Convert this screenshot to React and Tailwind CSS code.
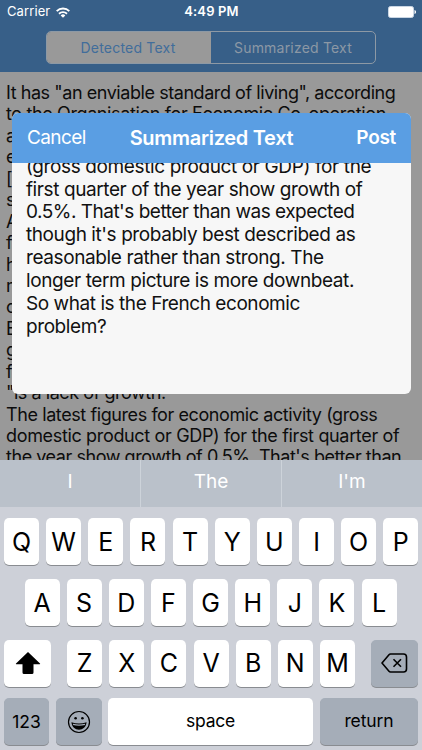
import { clsx } from 'clsx';

const ARTICLE = [
    ['It has "an enviable standard of living", according', 'tracking-[-0.44px]'],
    ['to the Organisation for Economic Co-operation', 'tracking-[-0.38px]'],
    ['a'],
    ['e'],
    ['['],
    ['s'],
    ['A'],
    ['f'],
    ['h'],
    ['m'],
    ['o'],
    ['E'],
    ['g'],
    ['f'],
    ['"is a lack of growth.', 'tracking-[-0.45px]'],
    ['The latest figures for economic activity (gross', 'tracking-[-0.41px]'],
    ['domestic product or GDP) for the first quarter of', 'tracking-[-0.34px]'],
    ["the year show growth of 0.5%. That's better than", 'tracking-[-0.45px]'],
];

const SUMMARY = [
    ['(gross domestic product or GDP) for the', 'tracking-[-0.38px]'],
    ['first quarter of the year show growth of', 'tracking-[-0.41px]'],
    ["0.5%. That's better than was expected", 'tracking-[-0.50px]'],
    ["though it's probably best described as", 'tracking-[-0.42px]'],
    ['reasonable rather than strong. The', 'tracking-[-0.39px]'],
    ['longer term picture is more downbeat.', 'tracking-[-0.40px]'],
    ['So what is the French economic', 'tracking-[-0.44px]'],
    ['problem?', 'tracking-[-0.42px]'],
];

function Key({ children, dark, className }) {
    return (
        <div
            className={clsx(
                'flex h-[47px] shrink-0 items-center justify-center rounded-[5px] shadow-[0_1px_0_#898c91]',
                dark ? 'bg-[#a5adb8]' : 'bg-white',
                className,
            )}
        >
            {children}
        </div>
    );
}

function Letters({ row }) {
    return (
        <div className="flex gap-[7.15px]">
            {row.split('').map((c) => (
                <Key key={c} className="w-[35px] pt-[2px] text-[25px]">{c}</Key>
            ))}
        </div>
    );
}

function StatusBar() {
    return (
        <div className="grid h-6 grid-cols-3 items-center pr-[6px] pl-[7px] text-[13px] text-white">
            <div className="flex items-center gap-[6px]">
                <span className="tracking-[0.1px]">Carrier</span>
                <svg width="14" height="11" viewBox="0 0 14 11" fill="none" stroke="white" strokeWidth="1.9">
                    <path d="M.7 4.1a9 9 0 0 1 12.6 0" />
                    <path d="M3 6.7a5.8 5.8 0 0 1 8 0" />
                    <path d="M7 10.800 4.700 8.500a3.2 3.2 0 0 1 4.600 0Z" fill="white" stroke="none" />
                </svg>
            </div>
            <div className="text-center font-semibold tracking-[0.15px] whitespace-nowrap">4:49 PM</div>
            <svg className="justify-self-end" width="28" height="12" viewBox="0 0 28 12">
                <rect x=".5" y=".5" width="25" height="11" rx="2" fill="white" stroke="#c9d6e4" />
                <path d="M26.5 4v4c1-.3 1.5-1 1.5-2s-.5-1.7-1.5-2Z" fill="white" />
            </svg>
        </div>
    );
}

function Keyboard() {
    return (
        <div className="h-[290px] bg-[#cdd0d8] text-black">
            <div className="grid h-[47px] grid-cols-[141px_141px_140px] divide-x divide-[#cdd3da] bg-[#bac1ca] text-center text-[19px] leading-[43px] text-white">
                <div>I</div>
                <div>The</div>
                <div>I'm</div>
            </div>
            <div className="flex flex-col pt-[11px]">
                <div className="pl-[4px]"><Letters row="QWERTYUIOP" /></div>
                <div className="mt-[14px] pl-[24.5px]"><Letters row="ASDFGHJKL" /></div>
                <div className="mt-[13.5px] flex justify-between px-[4px]">
                    <Key className="w-[47px]">
                        <svg width="26" height="24" viewBox="0 0 26 24">
                            <path d="M13 1 25 12.6Q25.5 13.3 24.7 13.3H18.5V21.5Q18.5 23 17 23H9Q7.5 23 7.5 21.5V13.3H1.3Q.5 13.3 1 12.6Z" />
                        </svg>
                    </Key>
                    <Letters row="ZXCVBNM" />
                    <Key dark className="w-[47px]">
                        <svg width="27" height="20" viewBox="0 0 27 20" fill="none" stroke="black" strokeWidth="1.6" strokeLinejoin="round">
                            <path d="M9.5 1H22.5Q25.5 1 25.5 4V16Q25.500 19 22.5 19H9.5Q8.6 19 8 18.3L1 10 8 1.7Q8.6 1 9.5 1Z" />
                            <path d="m12.5 6.2 7.5 7.6M20 6.2l-7.5 7.6" />
                        </svg>
                    </Key>
                </div>
                <div className="mt-[11.5px] flex pl-[4px] text-[17.5px]">
                    <Key dark className="w-[45px] pt-[2px]">123</Key>
                    <Key dark className="ml-[7px] w-[46px]">
                        <svg width="24" height="24" viewBox="0 0 24 24" fill="none" stroke="black" strokeWidth="1.2">
                            <circle cx="12" cy="12" r="10.5" />
                            <circle cx="8.6" cy="8.3" r="1.3" fill="black" stroke="none" />
                            <circle cx="15.4" cy="8.3" r="1.3" fill="black" stroke="none" />
                            <path d="M4.400 12.3Q12 14.8 19.600 12.3C19 17.2 16 19.700 12 19.700S5 17.2 4.400 12.3Z" fill="black" stroke="none" />
                            <path d="M6 14.4Q12 16 18 14.4" stroke="#a5adb8" strokeWidth="1.3" />
                        </svg>
                    </Key>
                    <Key className="ml-[6px] w-[205px] tracking-[-0.2px]">space</Key>
                    <Key dark className="ml-[7px] w-[98px] tracking-[-0.1px]">return</Key>
                </div>
            </div>
        </div>
    );
}

function Dialog() {
    return (
        <div className="absolute top-[113px] left-[12px] h-[281px] w-[399px] overflow-hidden rounded-[6px] bg-[#f7f7f7]">
            <div className="relative z-10 grid h-[50px] grid-cols-[1fr_auto_1fr] items-center bg-[#5a9ee3] px-[15px] text-white">
                <span className="pt-px text-[19px] tracking-[-0.6px]">Cancel</span>
                <span className="text-[20px] font-semibold tracking-[-0.3px]">Summarized Text</span>
                <span className="text-right text-[19px] font-semibold tracking-[-0.3px]">Post</span>
            </div>
            <div className="-mt-[7.4px] pl-[14px] text-[19px] leading-[22.9px] whitespace-nowrap text-[#111]">
                {SUMMARY.map(([line, tracking]) => <div key={line} className={tracking}>{line}</div>)}
            </div>
        </div>
    );
}

export default function App() {
    return (
        <div className="relative flex h-[750px] w-[422px] flex-col overflow-hidden bg-[#999] font-['Inter',sans-serif]">
            <div className="h-[72px] shrink-0 bg-[#375f88]">
                <StatusBar />
                <div className="mx-auto mt-[7px] grid h-[33px] w-[330px] grid-cols-2 overflow-hidden rounded-[5px] border border-[#8d99a5] text-center text-[14px] leading-[31px] tracking-[0.2px]">
                    <div className="bg-[#999] pr-[2px] text-[#416d9b]">Detected Text</div>
                    <div className="text-[#8c98a5]">Summarized Text</div>
                </div>
            </div>
            <div className="h-[388px] shrink-0 overflow-hidden pt-[10px] pl-[6px] text-[18px] leading-[21.43px] whitespace-nowrap text-[#0c0c0c]">
                {ARTICLE.map(([line, tracking], i) => <div key={i} className={tracking}>{line}</div>)}
            </div>
            <Keyboard />
            <Dialog />
        </div>
    );
}
